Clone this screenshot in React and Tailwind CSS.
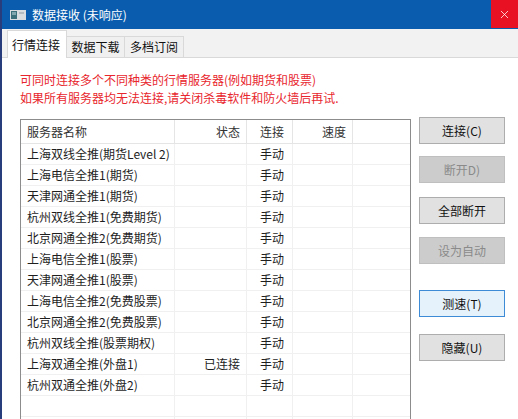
import { X } from 'lucide-react';

const servers = [
  { name: '上海双线全推(期货Level 2)', status: '', mode: '手动' },
  { name: '上海电信全推1(期货)', status: '', mode: '手动' },
  { name: '天津网通全推1(期货)', status: '', mode: '手动' },
  { name: '杭州双线全推1(免费期货)', status: '', mode: '手动' },
  { name: '北京网通全推2(免费期货)', status: '', mode: '手动' },
  { name: '上海电信全推1(股票)', status: '', mode: '手动' },
  { name: '天津网通全推1(股票)', status: '', mode: '手动' },
  { name: '上海电信全推2(免费股票)', status: '', mode: '手动' },
  { name: '北京网通全推2(免费股票)', status: '', mode: '手动' },
  { name: '杭州双线全推(股票期权)', status: '', mode: '手动' },
  { name: '上海双通全推(外盘1)', status: '已连接', mode: '手动' },
  { name: '杭州双通全推(外盘2)', status: '', mode: '手动' },
  { name: '', status: '', mode: '' },
  { name: '', status: '', mode: '' },
];

function Button({ children, disabled, focused, className = '' }) {
  let look = 'bg-[#e1e1e1] border-[#adadad] text-[#111]';
  if (disabled) look = 'bg-[#cccccc] border-[#bfbfbf] text-[#8a8a8a]';
  if (focused) look = 'bg-[#e5f1fb] border-[#3d8ad6] text-[#111]';
  return (
    <div className={`w-[86px] h-[27px] border flex items-center justify-center text-[12px] leading-none ${look} ${className}`}>
      {children}
    </div>
  );
}

export default function App() {
  return (
    <div className="w-[518px] h-[419px] overflow-hidden flex bg-white font-['Noto_Sans_CJK_SC',sans-serif]">
      <div className="w-[2px] shrink-0 bg-[#283d7c]" />
      <div className="flex-1 flex flex-col min-w-0">
        {/* title bar */}
        <div className="h-[29px] shrink-0 bg-[#0a5dae] flex items-center">
          <svg width="16" height="10" viewBox="0 0 16 10" className="ml-[8px]">
            <rect x="0" y="0" width="16" height="10" fill="#d9dde0" />
            <rect x="1" y="1" width="6" height="8" fill="#3b6f7a" />
            <rect x="2" y="2" width="4" height="3" fill="#7fa7ad" />
            <rect x="9" y="2" width="5" height="2" fill="#b5bcc1" />
          </svg>
          <span className="ml-[6px] text-white text-[12px] leading-none">数据接收 (未响应)</span>
          <div className="flex-1" />
          <div className="w-[27px] h-[28px] self-start bg-[#e81123] flex items-center justify-center">
            <X size={13} strokeWidth={1.4} className="text-white" />
          </div>
        </div>

        {/* tabs */}
        <div className="h-[29px] shrink-0 bg-[#f2f2f2] border-b border-[#d9d9d9] flex items-end pl-[5px]">
          <div className="h-[28px] -mb-px bg-white border border-b-0 border-[#d9d9d9] px-[4px] flex items-center text-[12px] text-[#111] w-[60px]">
            行情连接
          </div>
          <div className="h-[21px] bg-[#f0f0f0] border-t border-r border-[#d9d9d9] w-[58px] flex items-center justify-center text-[12px] text-[#111]">
            数据下载
          </div>
          <div className="h-[21px] bg-[#f0f0f0] border-t border-r border-[#d9d9d9] w-[59px] flex items-center justify-center text-[12px] text-[#111]">
            多档订阅
          </div>
        </div>

        {/* content */}
        <div className="flex-1 pl-[18px] pt-[13px] min-h-0">
          <div className="text-[12px] leading-[18px] text-[#e8262d]">
            <div>可同时连接多个不同种类的行情服务器(例如期货和股票)</div>
            <div>如果所有服务器均无法连接,请关闭杀毒软件和防火墙后再试.</div>
          </div>

          <div className="flex items-start mt-[12px]">
            <div className="w-[391px] h-[320px] border border-[#8c8c8c] flex flex-col text-[12px] text-[#1e1e1e]">
              <div className="h-[24px] shrink-0 flex border-b border-[#e5e5e5] text-[#333]">
                <div className="w-[154px] border-r border-[#e5e5e5] pl-[6px] flex items-center">服务器名称</div>
                <div className="w-[72px] border-r border-[#e5e5e5] pr-[6px] flex items-center justify-end">状态</div>
                <div className="w-[46px] border-r border-[#e5e5e5] pl-[13px] flex items-center">连接</div>
                <div className="w-[60px] border-r border-[#e5e5e5] pr-[6px] flex items-center justify-end">速度</div>
                <div className="flex-1" />
              </div>
              {servers.map((s, i) => (
                <div key={i} className="h-[21px] shrink-0 flex border-b border-[#f0f0f0]">
                  <div className="w-[154px] border-r border-[#f0f0f0] pl-[6px] flex items-center whitespace-nowrap">{s.name}</div>
                  <div className="w-[72px] border-r border-[#f0f0f0] pr-[6px] flex items-center justify-end">{s.status}</div>
                  <div className="w-[46px] border-r border-[#f0f0f0] pl-[13px] flex items-center">{s.mode}</div>
                  <div className="w-[60px] border-r border-[#f0f0f0]" />
                  <div className="flex-1" />
                </div>
              ))}
            </div>

            <div className="ml-[8px] -mt-[2px] flex flex-col">
              <Button>连接(C)</Button>
              <Button disabled className="mt-[12px]">断开D)</Button>
              <Button className="mt-[14px]">全部断开</Button>
              <Button disabled className="mt-[13px]">设为自动</Button>
              <Button focused className="mt-[26px]">测速(T)</Button>
              <Button className="mt-[17px]">隐藏(U)</Button>
            </div>
          </div>
        </div>
      </div>
    </div>
  );
}
